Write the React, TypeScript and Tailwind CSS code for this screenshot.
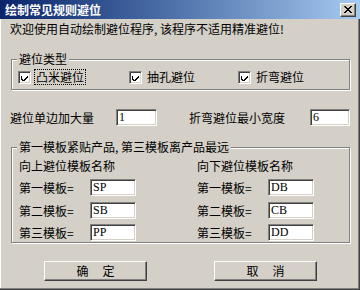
import React, { useState } from "react";

const font = "font-['SimSun','Noto_Sans_CJK_SC',sans-serif]";

const CheckMark = () => (
    <svg width="7" height="7" viewBox="0 0 7 7" className="block">
        <path d="M0 2h1v3h1v1h1v-1h1v-1h1v-1h1v-1h1v2h-1v1h-1v1h-1v1h-1v1h-1v-1h-1v-1h-1z" fill="#000" />
    </svg>
);

const Check: React.FC<{ label: string; focus?: boolean; className?: string }> = ({ label, focus, className }) => {
    const [on, setOn] = useState(true);
    return (
        <label className={"flex items-center cursor-default " + (className || "")} onClick={() => setOn(!on)}>
            <span className="w-[13px] h-[13px] bg-white border border-t-[#808080] border-l-[#808080] border-b-white border-r-white shadow-[inset_1px_1px_0_#404040,inset_-1px_-1px_0_#d4d0c8] flex items-center justify-center">
                {on && <CheckMark />}
            </span>
            <span className={"ml-[4px] px-[1px] leading-[14px] " + (focus ? "outline outline-1 outline-dotted outline-black" : "")}>
                {label}
            </span>
        </label>
    );
};

const Field: React.FC<{ value: string; w: string }> = ({ value, w }) => {
    const [v, setV] = useState(value);
    return (
        <input
            value={v}
            onChange={(e) => setV(e.target.value)}
            className={w + " h-[17px] bg-white border border-t-[#808080] border-l-[#808080] border-b-white border-r-white shadow-[inset_1px_1px_0_#404040,inset_-1px_-1px_0_#d4d0c8] px-[2px] text-[12px] leading-[13px] font-['Liberation_Serif',serif] text-black outline-none"}
        />
    );
};

const Row: React.FC<{ label: string; value: string; className?: string }> = ({ label, value, className }) => (
    <div className={"flex items-center " + (className || "")}>
        <span className="w-[71px] leading-[14px]">{label}</span>
        <Field value={value} w="w-[46px]" />
    </div>
);

const Button: React.FC<{ a: string; b: string }> = ({ a, b }) => (
    <button className="w-[103px] h-[20px] bg-[#d4d0c8] border border-t-white border-l-white border-r-[#404040] border-b-[#404040] shadow-[inset_-1px_-1px_0_#808080] text-[12px] leading-[14px] flex items-center justify-center gap-[14px]">
        <span>{a}</span>
        <span>{b}</span>
    </button>
);

const App: React.FC = () => {
    return (
        <div className={"w-[360px] h-[290px] bg-[#d4d0c8] text-black text-[12px] flex flex-col shadow-[inset_-1px_-1px_0_#404040,inset_-2px_-2px_0_#808080,inset_1px_0_0_#fff] " + font}>
            {/* title bar */}
            <div className="h-[19px] bg-gradient-to-r from-[#0a246a] to-[#a6caf0] flex items-center pl-[5px] pr-[4px]">
                <span className="text-white font-bold leading-[14px]">绘制常见规则避位</span>
                <button className="ml-auto w-[16px] h-[14px] bg-[#d4d0c8] border border-t-white border-l-white border-r-[#404040] border-b-[#404040] shadow-[inset_-1px_-1px_0_#808080] flex items-center justify-center">
                    <svg width="8" height="7" viewBox="0 0 8 7">
                        <path d="M0 0h2v1h1v1h2v-1h1v-1h2v1h-1v1h-1v1h-1v1h1v1h1v1h1v1h-2v-1h-1v-1h-2v1h-1v1h-2v-1h1v-1h1v-1h1v-1h-1v-1h-1z" fill="#000" />
                    </svg>
                </button>
            </div>

            <div className="mt-[3px] pl-[10px] leading-[14px]">欢迎使用自动绘制避位程序, 该程序不适用精准避位!</div>

            {/* group 1 */}
            <fieldset className="mt-[16px] ml-[11px] w-[339px] border border-[#808080] shadow-[inset_1px_1px_0_#fff,1px_1px_0_#fff] pt-[4px] pb-[5px]">
                <legend className="ml-[5px] px-[2px] bg-[#d4d0c8] leading-[14px]">避位类型</legend>
                <div className="flex">
                    <Check label="凸米避位" focus className="ml-[6px] w-[111px]" />
                    <Check label="抽孔避位" className="w-[109px]" />
                    <Check label="折弯避位" />
                </div>
            </fieldset>

            <div className="mt-[19px] flex items-center">
                <span className="ml-[10px] w-[106px] leading-[14px]">避位单边加大量</span>
                <Field value="1" w="w-[41px]" />
                <span className="ml-[32px] w-[121px] leading-[14px]">折弯避位最小宽度</span>
                <Field value="6" w="w-[40px]" />
            </div>

            {/* group 2 */}
            <fieldset className="mt-[14px] ml-[11px] w-[339px] border border-[#808080] shadow-[inset_1px_1px_0_#fff,1px_1px_0_#fff] pt-[5px] pb-[1px]">
                <legend className="ml-[5px] px-[2px] bg-[#d4d0c8] leading-[14px]">第一模板紧贴产品, 第三模板离产品最远</legend>
                <div className="flex pl-[7px]">
                    <div className="w-[178px] flex flex-col">
                        <span className="leading-[14px]">向上避位模板名称</span>
                        <Row label="第一模板=" value="SP" className="mt-[6px]" />
                        <Row label="第二模板=" value="SB" className="mt-[6px]" />
                        <Row label="第三模板=" value="PP" className="mt-[5px]" />
                    </div>
                    <div className="flex flex-col">
                        <span className="leading-[14px]">向下避位模板名称</span>
                        <Row label="第一模板=" value="DB" className="mt-[6px]" />
                        <Row label="第二模板=" value="CB" className="mt-[6px]" />
                        <Row label="第三模板=" value="DD" className="mt-[5px]" />
                    </div>
                </div>
            </fieldset>

            <div className="mt-[18px] flex pl-[44px] gap-[67px]">
                <Button a="确" b="定" />
                <Button a="取" b="消" />
            </div>
        </div>
    );
};

export default App;
